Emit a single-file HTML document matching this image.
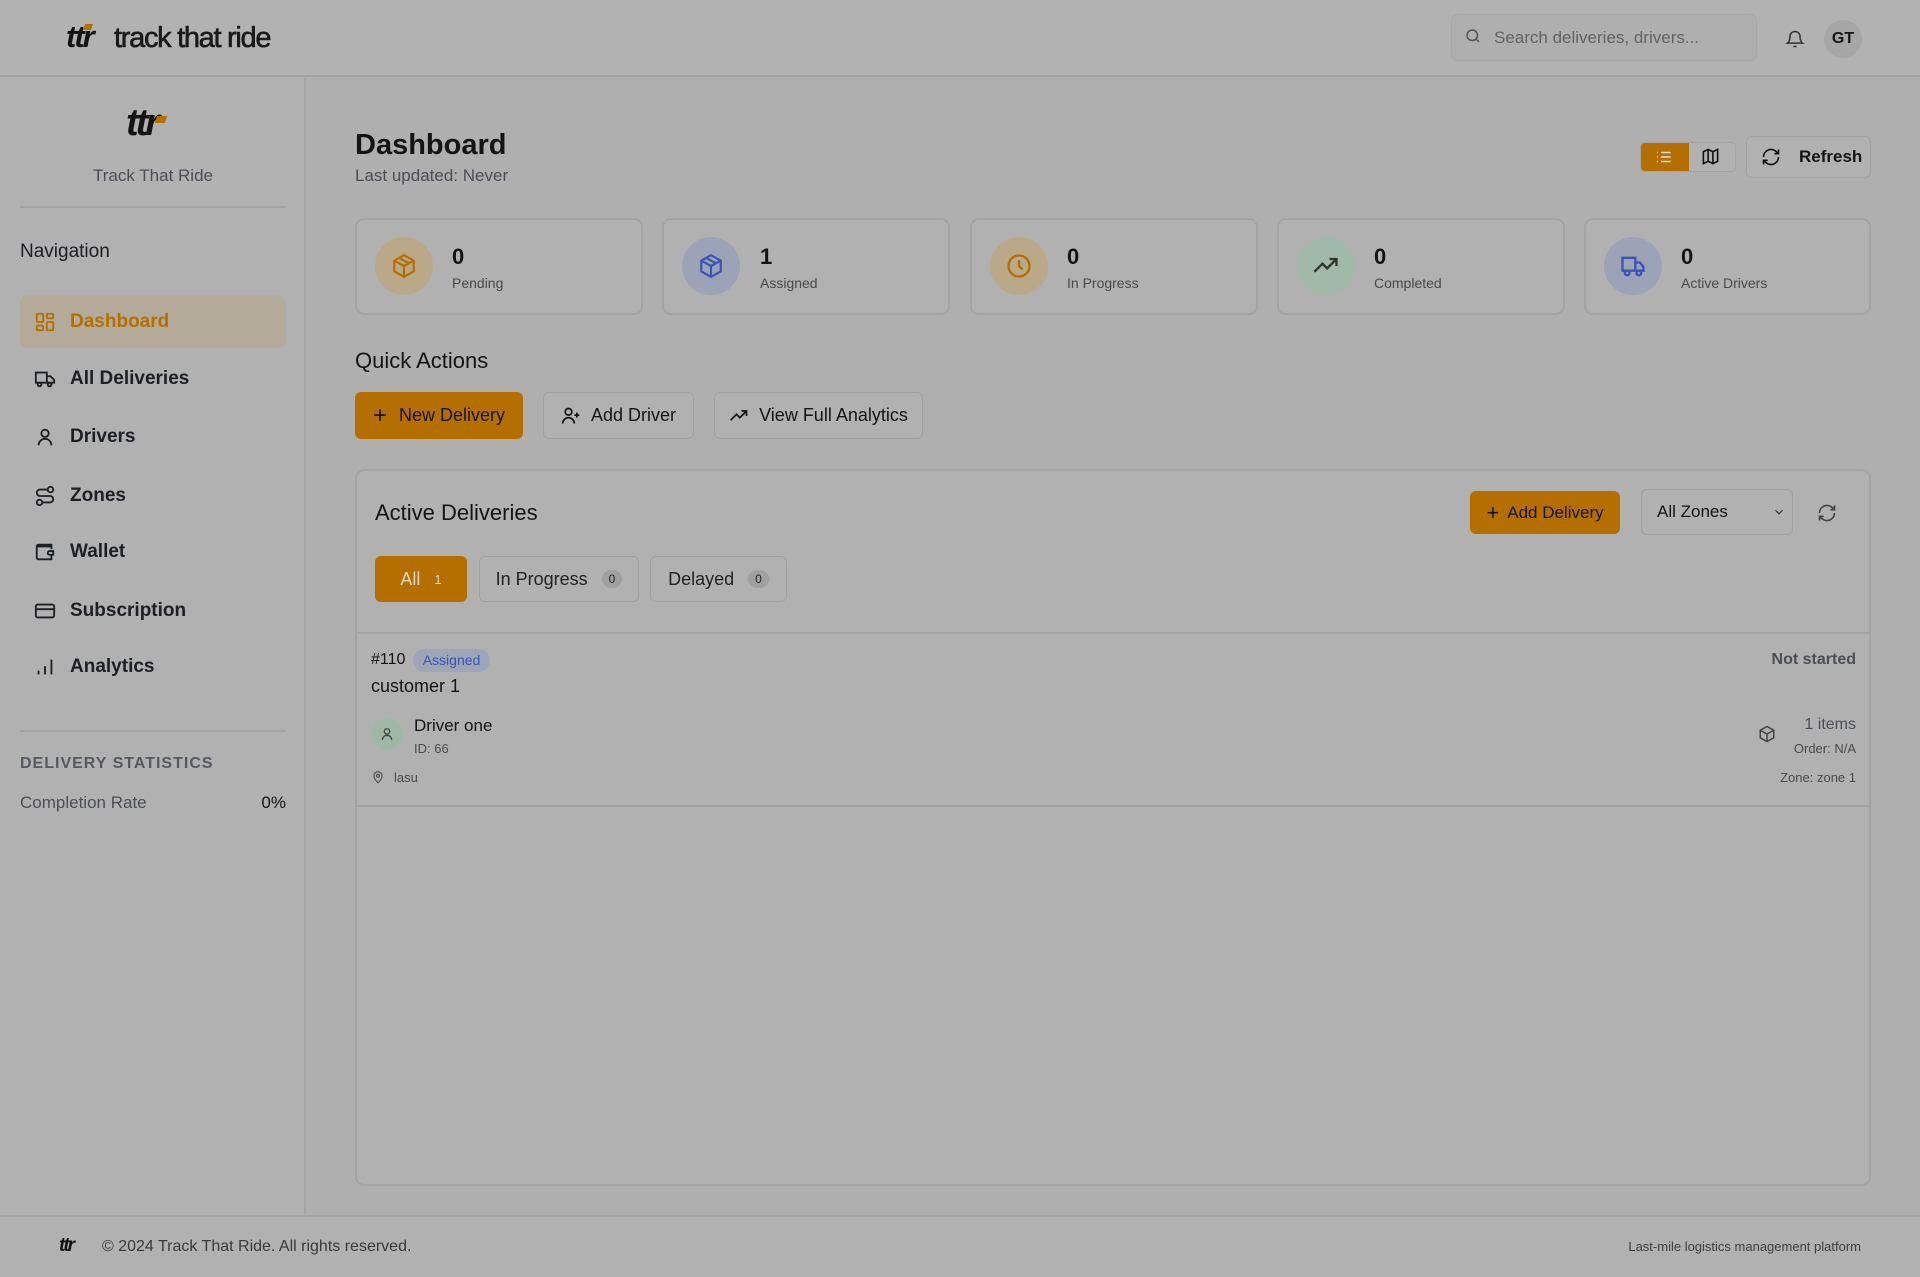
<!DOCTYPE html>
<html><head><meta charset="utf-8"><style>
*{box-sizing:border-box;margin:0;padding:0}
body{width:1920px;height:1277px;background:#aeafae;font-family:"Liberation Sans",sans-serif;color:#141414;position:relative;overflow:hidden}
.a{position:absolute}
.hdr{left:0;top:0;width:1920px;height:77px;background:#b2b2b2;border-bottom:2px solid #a2a2a2}
.side{left:0;top:78px;width:306px;height:1138px;background:#b1b1b1;border-right:2px solid #a4a4a4}
.card{background:#b1b1b1;border:2px solid #a3a3a3;border-radius:9px}
.nav{left:20px;width:266px;height:53px;display:flex;align-items:center;font-size:19px;font-weight:bold;color:#1c1f24}
.nav svg{margin-left:14px;margin-right:14px}
.btn{border:1.5px solid #a1a1a1;border-radius:6px;background:#b1b1b1;display:flex;align-items:center;justify-content:center;font-size:18px;color:#141414}
.or{background:#b56f00;border-color:#b56f00}
.circ{width:58px;height:58px;border-radius:50%;display:flex;align-items:center;justify-content:center}
.num{font-size:22px;font-weight:bold}
.lbl{font-size:14px;color:#4a4a4a}
.gray{color:#4b4f55}
</style></head><body>
<div class="a hdr"></div>
<div class="a" style="left:66px;top:19px;font-size:31px;font-weight:bold;font-style:italic;letter-spacing:-2px">ttr</div>
<div class="a" style="left:84px;top:24px;width:8px;height:6px;background:#b56f00;transform:skewX(-20deg)"></div>
<div class="a" style="left:114px;top:22px;font-size:29px;letter-spacing:-1.3px;color:#1a1a1a;-webkit-text-stroke:0.6px #1a1a1a">track that ride</div>
<div class="a" style="left:1451px;top:14px;width:306px;height:47px;border:1.5px solid #a8a8a8;border-radius:7px;background:#afafaf"></div>
<svg class="a" style="left:1464px;top:27px" width="18" height="18" viewBox="0 0 24 24" fill="none" stroke="#555" stroke-width="2"><circle cx="11" cy="11" r="7"/><path d="M20 20l-4-4"/></svg>
<div class="a" style="left:1494px;top:28px;font-size:17px;color:#636363">Search deliveries, drivers...</div>
<svg class="a" style="left:1785px;top:28px" width="20" height="22" viewBox="0 0 24 24" fill="none" stroke="#333" stroke-width="1.8"><path d="M6 9a6 6 0 0112 0c0 6 3 8 3 8H3s3-2 3-8M10 21h4"/></svg>
<div class="a" style="left:1824px;top:20px;width:38px;height:38px;border-radius:50%;background:#a6a6a6;display:flex;align-items:center;justify-content:center;font-size:16px;font-weight:bold">GT</div>

<div class="a side"></div>
<div class="a" style="left:126px;top:102px;font-size:38px;font-weight:bold;font-style:italic;letter-spacing:-3px">ttr</div>
<div class="a" style="left:156px;top:116px;width:10px;height:7px;background:#b56f00;transform:skewX(-20deg)"></div>
<div class="a gray" style="left:0;width:306px;text-align:center;top:166px;font-size:17px">Track That Ride</div>
<div class="a" style="left:20px;top:206px;width:266px;height:2px;background:#a3a3a3"></div>
<div class="a" style="left:20px;top:241px;font-size:19px;color:#1c1f24">Navigation</div>
<div class="a nav" style="top:295px;background:#b3aa9a;border-radius:8px;color:#b56f00"><svg width="22" height="22" viewBox="0 0 24 24" fill="none" stroke="#b56f00" stroke-width="2"><rect x="3" y="3" width="7" height="9" rx="1"/><rect x="14" y="3" width="7" height="5" rx="1"/><rect x="14" y="12" width="7" height="9" rx="1"/><rect x="3" y="16" width="7" height="5" rx="1"/></svg>Dashboard</div>
<div class="a nav" style="top:352px"><svg width="22" height="22" viewBox="0 0 24 24" fill="none" stroke="#1c1f24" stroke-width="2"><path d="M2 5h12v11H2zM14 9h4l4 4v3h-8"/><circle cx="6" cy="18" r="2"/><circle cx="17" cy="18" r="2"/></svg>All Deliveries</div>
<div class="a nav" style="top:410px"><svg width="22" height="22" viewBox="0 0 24 24" fill="none" stroke="#1c1f24" stroke-width="2"><circle cx="12" cy="8" r="4"/><path d="M5 21a7 7 0 0114 0"/></svg>Drivers</div>
<div class="a nav" style="top:469px"><svg width="22" height="22" viewBox="0 0 24 24" fill="none" stroke="#1c1f24" stroke-width="2"><circle cx="6" cy="19" r="3"/><circle cx="18" cy="5" r="3"/><path d="M9 19h8.5a3.5 3.5 0 000-7h-11a3.5 3.5 0 010-7H15"/></svg>Zones</div>
<div class="a nav" style="top:525px"><svg width="22" height="22" viewBox="0 0 24 24" fill="none" stroke="#1c1f24" stroke-width="2"><path d="M19 7V4H5a2 2 0 00-2 2v12a2 2 0 002 2h14v-5M3 6h16v3"/><path d="M21 11h-4a2 2 0 000 4h4z"/></svg>Wallet</div>
<div class="a nav" style="top:584px"><svg width="22" height="22" viewBox="0 0 24 24" fill="none" stroke="#1c1f24" stroke-width="2"><rect x="2" y="5" width="20" height="14" rx="2"/><path d="M2 10h20"/></svg>Subscription</div>
<div class="a nav" style="top:640px"><svg width="22" height="22" viewBox="0 0 24 24" fill="none" stroke="#1c1f24" stroke-width="2"><path d="M5 20v-4M12 20v-9M19 20V4"/></svg>Analytics</div>
<div class="a" style="left:20px;top:730px;width:266px;height:2px;background:#a3a3a3"></div>
<div class="a gray" style="left:20px;top:755px;font-size:16px;letter-spacing:1px;font-weight:bold;color:#555a60">DELIVERY STATISTICS</div>
<div class="a gray" style="left:20px;top:793px;font-size:17px">Completion Rate</div>
<div class="a" style="left:200px;width:86px;text-align:right;top:793px;font-size:17px">0%</div>

<div class="a" style="left:355px;top:129px;font-size:29px;font-weight:bold">Dashboard</div>
<div class="a gray" style="left:355px;top:166px;font-size:17px">Last updated: Never</div>
<div class="a" style="left:1640px;top:142px;width:96px;height:30px;border:1.5px solid #a3a3a3;border-radius:5px;overflow:hidden;background:#b1b1b1"><div style="width:48px;height:30px;background:#b56f00"></div></div>
<svg class="a" style="left:1655px;top:148px" width="18" height="18" viewBox="0 0 24 24" fill="none" stroke="#ddd" stroke-width="2"><path d="M8 6h13M8 12h13M8 18h13M3 6h1M3 12h1M3 18h1"/></svg>
<svg class="a" style="left:1701px;top:147px" width="19" height="19" viewBox="0 0 24 24" fill="none" stroke="#111" stroke-width="2"><path d="M3 6l6-3 6 3 6-3v15l-6 3-6-3-6 3zM9 3v15M15 6v15"/></svg>
<div class="a btn" style="left:1746px;top:136px;width:125px;height:42px;justify-content:flex-start;padding-left:14px"><svg width="20" height="20" viewBox="0 0 24 24" fill="none" stroke="#111" stroke-width="2"><path d="M21 12a9 9 0 01-15 6.7L3 16M3 12a9 9 0 0115-6.7L21 8M21 3v5h-5M3 21v-5h5"/></svg><span style="margin-left:18px;font-weight:bold;font-size:17px">Refresh</span></div>

<div class="a card" style="left:355px;top:218px;width:288px;height:97px"></div>
<div class="a card" style="left:662px;top:218px;width:288px;height:97px"></div>
<div class="a card" style="left:970px;top:218px;width:288px;height:97px"></div>
<div class="a card" style="left:1277px;top:218px;width:288px;height:97px"></div>
<div class="a card" style="left:1584px;top:218px;width:287px;height:97px"></div>
<div class="a circ" style="left:375px;top:237px;background:#b9a989"><svg width="26" height="26" viewBox="0 0 24 24" fill="none" stroke="#b56f00" stroke-width="2"><path d="M12 2l9 5v10l-9 5-9-5V7zM3 7l9 5 9-5M12 12v10M7.5 4.5l9 5"/></svg></div>
<div class="a circ" style="left:682px;top:237px;background:#9ca3b6"><svg width="26" height="26" viewBox="0 0 24 24" fill="none" stroke="#3a55b5" stroke-width="2"><path d="M12 2l9 5v10l-9 5-9-5V7zM3 7l9 5 9-5M12 12v10M7.5 4.5l9 5"/></svg></div>
<div class="a circ" style="left:990px;top:237px;background:#b9a989"><svg width="28" height="28" viewBox="0 0 24 24" fill="none" stroke="#b56f00" stroke-width="2"><circle cx="12" cy="12" r="9"/><path d="M12 7v5l3 3"/></svg></div>
<div class="a circ" style="left:1297px;top:237px;background:#a0b9a9"><svg width="28" height="28" viewBox="0 0 24 24" fill="none" stroke="#333" stroke-width="2"><path d="M2 17l7-7 4 4 8-8M15 6h6v6"/></svg></div>
<div class="a circ" style="left:1604px;top:237px;background:#9ca3b6"><svg width="28" height="28" viewBox="0 0 24 24" fill="none" stroke="#3a55b5" stroke-width="2"><path d="M3 5h11v11H3zM14 9h4l3 4v3h-7"/><circle cx="7" cy="18" r="2"/><circle cx="17" cy="18" r="2"/></svg></div>
<div class="a num" style="left:452px;top:244px">0</div><div class="a lbl" style="left:452px;top:275px">Pending</div>
<div class="a num" style="left:760px;top:244px">1</div><div class="a lbl" style="left:760px;top:275px">Assigned</div>
<div class="a num" style="left:1067px;top:244px">0</div><div class="a lbl" style="left:1067px;top:275px">In Progress</div>
<div class="a num" style="left:1374px;top:244px">0</div><div class="a lbl" style="left:1374px;top:275px">Completed</div>
<div class="a num" style="left:1681px;top:244px">0</div><div class="a lbl" style="left:1681px;top:275px">Active Drivers</div>

<div class="a" style="left:355px;top:348px;font-size:22px">Quick Actions</div>
<div class="a btn or" style="left:355px;top:392px;width:168px;height:47px"><span style="font-size:24px;margin-right:12px">+</span>New Delivery</div>
<div class="a btn" style="left:543px;top:392px;width:151px;height:47px"><svg width="20" height="20" viewBox="0 0 24 24" fill="none" stroke="#111" stroke-width="2" style="margin-right:10px"><circle cx="9" cy="7" r="4"/><path d="M2 21a7 7 0 0114 0M19 8v6M16 11h6"/></svg>Add Driver</div>
<div class="a btn" style="left:714px;top:392px;width:209px;height:47px"><svg width="20" height="20" viewBox="0 0 24 24" fill="none" stroke="#111" stroke-width="2" style="margin-right:10px"><path d="M2 17l7-7 4 4 8-8M15 6h6v6"/></svg>View Full Analytics</div>

<div class="a card" style="left:355px;top:469px;width:1516px;height:717px"></div>
<div class="a" style="left:375px;top:500px;font-size:22px">Active Deliveries</div>
<div class="a btn or" style="left:1470px;top:491px;width:150px;height:43px;font-size:17px"><span style="font-size:22px;margin-right:8px">+</span>Add Delivery</div>
<div class="a btn" style="left:1641px;top:489px;width:152px;height:46px;justify-content:flex-start;padding-left:15px;font-size:17px">All Zones<svg width="14" height="14" viewBox="0 0 24 24" fill="none" stroke="#333" stroke-width="2" style="margin-left:44px"><path d="M6 9l6 6 6-6"/></svg></div>
<svg class="a" style="left:1817px;top:503px" width="20" height="20" viewBox="0 0 24 24" fill="none" stroke="#444" stroke-width="2"><path d="M21 12a9 9 0 01-15 6.7L3 16M3 12a9 9 0 0115-6.7L21 8M21 3v5h-5M3 21v-5h5"/></svg>
<div class="a btn or" style="left:375px;top:556px;width:92px;height:46px;color:#e6d6bd">All<span style="margin-left:14px;font-size:13px">1</span></div>
<div class="a btn" style="left:479px;top:556px;width:160px;height:46px;color:#222">In Progress<span style="margin-left:14px;font-size:12px;background:#a0a0a0;border-radius:9px;padding:2px 7px">0</span></div>
<div class="a btn" style="left:650px;top:556px;width:137px;height:46px;color:#222">Delayed<span style="margin-left:14px;font-size:12px;background:#a0a0a0;border-radius:9px;padding:2px 7px">0</span></div>
<div class="a" style="left:356px;top:632px;width:1514px;height:2px;background:#a3a3a3"></div>
<div class="a" style="left:371px;top:651px;font-size:16px">#110</div>
<div class="a" style="left:413px;top:649px;width:77px;height:23px;border-radius:12px;background:#9ea5b8;color:#3a55b0;font-size:14px;text-align:center;line-height:23px">Assigned</div>
<div class="a" style="left:371px;top:676px;font-size:18px">customer 1</div>
<div class="a circ" style="left:371px;top:718px;width:32px;height:32px;background:#9fb8a6"><svg width="16" height="16" viewBox="0 0 24 24" fill="none" stroke="#444" stroke-width="2"><circle cx="12" cy="8" r="4"/><path d="M5 21a7 7 0 0114 0"/></svg></div>
<div class="a" style="left:414px;top:716px;font-size:17px">Driver one</div>
<div class="a lbl" style="left:414px;top:741px;font-size:13px">ID: 66</div>
<svg class="a" style="left:371px;top:769px" width="14" height="16" viewBox="0 0 24 24" fill="none" stroke="#555" stroke-width="2"><path d="M12 22s7-7 7-12a7 7 0 00-14 0c0 5 7 12 7 12z"/><circle cx="12" cy="10" r="2.5"/></svg>
<div class="a lbl" style="left:394px;top:770px;font-size:13px">lasu</div>
<div class="a gray" style="left:1600px;width:256px;text-align:right;top:651px;font-size:16px;font-weight:bold">Not started</div>
<div class="a gray" style="left:1600px;width:256px;text-align:right;top:716px;font-size:16px">1 items</div>
<div class="a lbl" style="left:1600px;width:256px;text-align:right;top:741px;font-size:13px">Order: N/A</div>
<div class="a lbl" style="left:1600px;width:256px;text-align:right;top:770px;font-size:13px">Zone: zone 1</div>
<svg class="a" style="left:1758px;top:725px" width="18" height="18" viewBox="0 0 24 24" fill="none" stroke="#444" stroke-width="2"><path d="M12 2l9 5v10l-9 5-9-5V7zM3 7l9 5 9-5M12 12v10"/></svg>
<div class="a" style="left:356px;top:805px;width:1514px;height:2px;background:#a3a3a3"></div>

<div class="a" style="left:0;top:1215px;width:1920px;height:62px;background:#b1b1b1;border-top:2px solid #a3a3a3"></div>
<div class="a" style="left:59px;top:1235px;font-size:19px;font-weight:bold;font-style:italic;letter-spacing:-2px">ttr</div>
<div class="a gray" style="left:102px;top:1238px;font-size:16px;color:#3a3a3a">© 2024 Track That Ride. All rights reserved.</div>
<div class="a" style="left:1500px;width:361px;text-align:right;top:1239px;font-size:13px;color:#3f3f3f">Last-mile logistics management platform</div>
</body></html>
